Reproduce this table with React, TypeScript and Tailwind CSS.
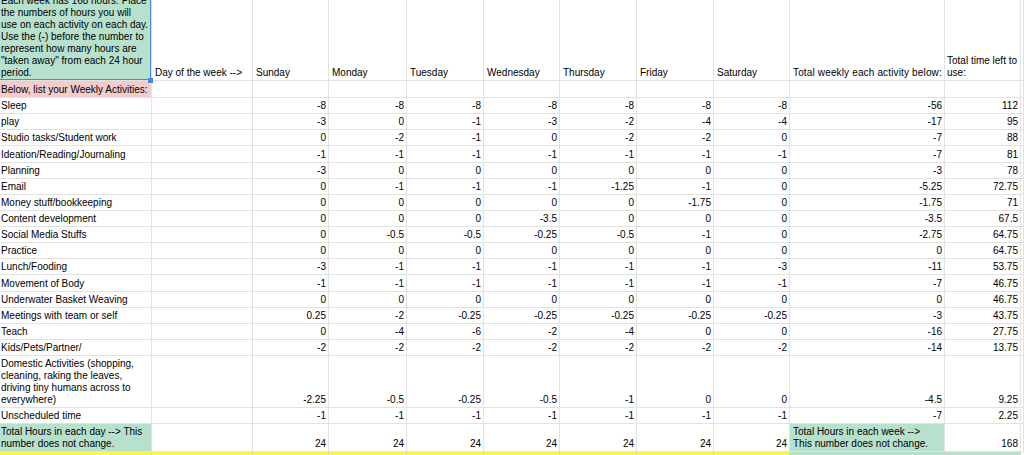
import React from "react";

type DataRow = {
  label: string;
  v: string[];
  total: string;
  left: string;
};

const rows: DataRow[] = [
  { label: "Sleep", v: ["-8", "-8", "-8", "-8", "-8", "-8", "-8"], total: "-56", left: "112" },
  { label: "play", v: ["-3", "0", "-1", "-3", "-2", "-4", "-4"], total: "-17", left: "95" },
  { label: "Studio tasks/Student work", v: ["0", "-2", "-1", "0", "-2", "-2", "0"], total: "-7", left: "88" },
  { label: "Ideation/Reading/Journaling", v: ["-1", "-1", "-1", "-1", "-1", "-1", "-1"], total: "-7", left: "81" },
  { label: "Planning", v: ["-3", "0", "0", "0", "0", "0", "0"], total: "-3", left: "78" },
  { label: "Email", v: ["0", "-1", "-1", "-1", "-1.25", "-1", "0"], total: "-5.25", left: "72.75" },
  { label: "Money stuff/bookkeeping", v: ["0", "0", "0", "0", "0", "-1.75", "0"], total: "-1.75", left: "71" },
  { label: "Content development", v: ["0", "0", "0", "-3.5", "0", "0", "0"], total: "-3.5", left: "67.5" },
  { label: "Social Media Stuffs", v: ["0", "-0.5", "-0.5", "-0.25", "-0.5", "-1", "0"], total: "-2.75", left: "64.75" },
  { label: "Practice", v: ["0", "0", "0", "0", "0", "0", "0"], total: "0", left: "64.75" },
  { label: "Lunch/Fooding", v: ["-3", "-1", "-1", "-1", "-1", "-1", "-3"], total: "-11", left: "53.75" },
  { label: "Movement of Body", v: ["-1", "-1", "-1", "-1", "-1", "-1", "-1"], total: "-7", left: "46.75" },
  { label: "Underwater Basket Weaving", v: ["0", "0", "0", "0", "0", "0", "0"], total: "0", left: "46.75" },
  { label: "Meetings with team or self", v: ["0.25", "-2", "-0.25", "-0.25", "-0.25", "-0.25", "-0.25"], total: "-3", left: "43.75" },
  { label: "Teach", v: ["0", "-4", "-6", "-2", "-4", "0", "0"], total: "-16", left: "27.75" },
  { label: "Kids/Pets/Partner/", v: ["-2", "-2", "-2", "-2", "-2", "-2", "-2"], total: "-14", left: "13.75" },
  {
    label: "Domestic Activities (shopping, cleaning, raking the leaves, driving tiny humans across to everywhere)",
    v: ["-2.25", "-0.5", "-0.25", "-0.5", "-1", "0", "0"],
    total: "-4.5",
    left: "9.25",
  },
  { label: "Unscheduled time", v: ["-1", "-1", "-1", "-1", "-1", "-1", "-1"], total: "-7", left: "2.25" },
];

const days = ["Sunday", "Monday", "Tuesday", "Wednesday", "Thursday", "Friday", "Saturday"];

const base = "border-r border-b border-[#e2e2e2] flex items-end pb-[1px] min-w-0";
const textCell = `${base} pl-[3px] pr-[2px]`;
const numCell = `${base} justify-end pl-[3px] pr-[2px] whitespace-nowrap`;
const firstCell = `${base} pl-[1px] pr-[1.5px]`;

export default function App() {
  return (
    <div
      className="w-[1024px] h-[455px] overflow-hidden bg-white text-black text-[10px] leading-[12px]"
      style={{ fontFamily: '"Liberation Sans", Arial, sans-serif' }}
    >
      <div className="grid grid-cols-[152px_101px_76px_78px_77px_76px_77px_77px_76px_155px_76px_1fr] grid-rows-[81px_17px_repeat(16,16.125px)_52px_16px_28px_30px]">
        {/* Header row */}
        <div className={`${firstCell} relative bg-[#b7e1cd]`}>
          <div>
            Each week has 168 hours. Place the numbers of hours you will use on each activity on each day. Use the (-) before the number to represent how many hours are "taken away" from each 24 hour period.
          </div>
          <div className="absolute inset-0 border-r border-b border-[#4a86e8] pointer-events-none" />
          <div className="absolute right-[-2px] bottom-[-3px] w-[5px] h-[5px] bg-[#4a86e8] z-10" />
        </div>
        <div className={`${textCell} whitespace-nowrap`}>Day of the week --&gt;</div>
        {days.map((d) => (
          <div key={d} className={`${textCell} whitespace-nowrap`}>
            {d}
          </div>
        ))}
        <div className={`${textCell} whitespace-nowrap tracking-[0.15px]`}>Total weekly each activity below:</div>
        <div className={`${base} pl-[2px] pr-0`}>
          <div>
            <div className="whitespace-nowrap">Total time left to</div>
            <div>use:</div>
          </div>
        </div>
        <div className={base} />

        {/* Below row */}
        <div className={`${firstCell} bg-[#f4cccc] whitespace-nowrap`}>Below, list your Weekly Activities:</div>
        {Array.from({ length: 10 }).map((_, i) => (
          <div key={i} className={base} />
        ))}
        <div className={base} />

        {/* Data rows */}
        {rows.map((r) => (
          <React.Fragment key={r.label}>
            <div className={firstCell}>
              <div>{r.label}</div>
            </div>
            <div className={base} />
            {r.v.map((n, i) => (
              <div key={i} className={numCell}>
                {n}
              </div>
            ))}
            <div className={numCell}>{r.total}</div>
            <div className={numCell}>{r.left}</div>
            <div className={base} />
          </React.Fragment>
        ))}

        {/* Totals row */}
        <div className={`${firstCell} bg-[#b7e1cd]`}>
          <div>Total Hours in each day --&gt; This number does not change.</div>
        </div>
        <div className={base} />
        {days.map((d) => (
          <div key={d} className={numCell}>
            24
          </div>
        ))}
        <div className={`${textCell} bg-[#b7e1cd]`}>
          <div>
            <div className="whitespace-nowrap">Total Hours in each week --&gt;</div>
            <div className="whitespace-nowrap">This number does not change.</div>
          </div>
        </div>
        <div className={numCell}>168</div>
        <div className={base} />

        {/* Yellow / green bottom row */}
        <div className="bg-[#fbf54c] border-r border-[#e6e29a]" />
        <div className="bg-[#fbf54c] border-r border-[#e6e29a]" />
        {days.map((d) => (
          <div key={d} className="bg-[#fbf54c] border-r border-[#e6e29a]" />
        ))}
        <div className="bg-[#b7e1cd] border-r border-[#cfd8d3]" />
        <div className="bg-[#b7e1cd] border-r border-[#cfd8d3]" />
        <div />
      </div>
    </div>
  );
}
